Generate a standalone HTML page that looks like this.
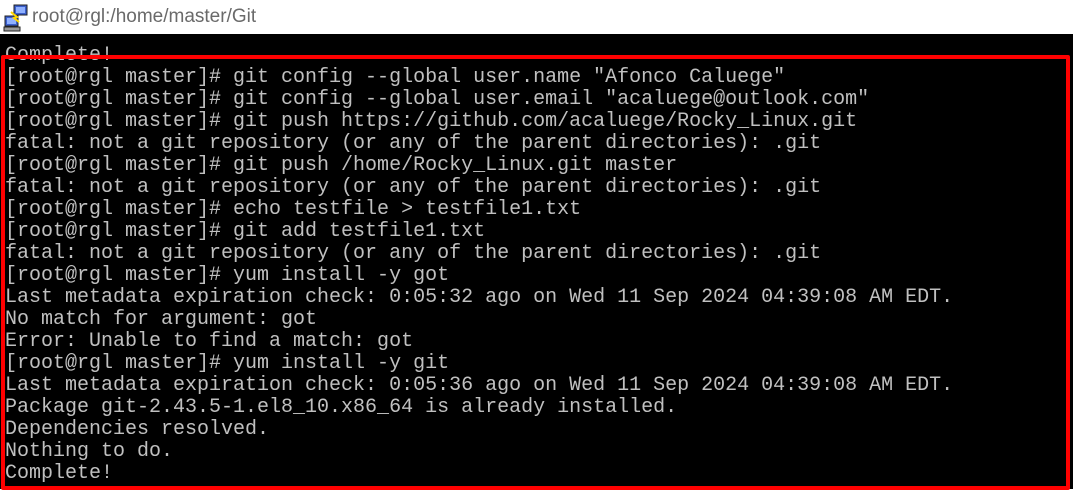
<!DOCTYPE html>
<html><head><style>
html,body{margin:0;padding:0;width:1073px;height:489px;overflow:hidden;background:#fff}
#t{position:absolute;left:0;top:0;width:1073px;height:34px;background:#fff}
#t span{position:absolute;left:32px;top:6px;font:19px "Liberation Sans",sans-serif;color:#6a6a6a}
#term{position:absolute;left:0;top:34px;width:1073px;height:455px;background:#000}
pre{position:absolute;left:5px;top:11px;margin:0;font:20px/22px "Liberation Mono",monospace;color:#c0c0c0}
#box{position:absolute;left:1px;top:55px;width:1061px;height:427px;border:4px solid #f00;border-radius:2px}
</style></head><body>
<div id="t"><svg width="26" height="28" style="position:absolute;left:3px;top:4px" viewBox="0 0 26 28">
<rect x="11" y="1" width="13" height="10" fill="#3a5fcd" stroke="#222"/><rect x="13" y="3" width="9" height="6" fill="#8fb0ff"/>
<rect x="2" y="12" width="13" height="10" fill="#3a5fcd" stroke="#222"/><rect x="4" y="14" width="9" height="6" fill="#8fb0ff"/>
<rect x="1" y="23" width="16" height="4" fill="#999" stroke="#222"/><path d="M8 8 L14 13 L11 14 L16 18" stroke="#ffd700" stroke-width="2" fill="none"/></svg>
<span>root@rgl:/home/master/Git</span></div>
<div id="term"><pre>Complete!
[root@rgl master]# git config --global user.name "Afonco Caluege"
[root@rgl master]# git config --global user.email "acaluege@outlook.com"
[root@rgl master]# git push https://github.com/acaluege/Rocky_Linux.git
fatal: not a git repository (or any of the parent directories): .git
[root@rgl master]# git push /home/Rocky_Linux.git master
fatal: not a git repository (or any of the parent directories): .git
[root@rgl master]# echo testfile &gt; testfile1.txt
[root@rgl master]# git add testfile1.txt
fatal: not a git repository (or any of the parent directories): .git
[root@rgl master]# yum install -y got
Last metadata expiration check: 0:05:32 ago on Wed 11 Sep 2024 04:39:08 AM EDT.
No match for argument: got
Error: Unable to find a match: got
[root@rgl master]# yum install -y git
Last metadata expiration check: 0:05:36 ago on Wed 11 Sep 2024 04:39:08 AM EDT.
Package git-2.43.5-1.el8_10.x86_64 is already installed.
Dependencies resolved.
Nothing to do.
Complete!</pre></div>
<div id="box"></div>
</body></html>
